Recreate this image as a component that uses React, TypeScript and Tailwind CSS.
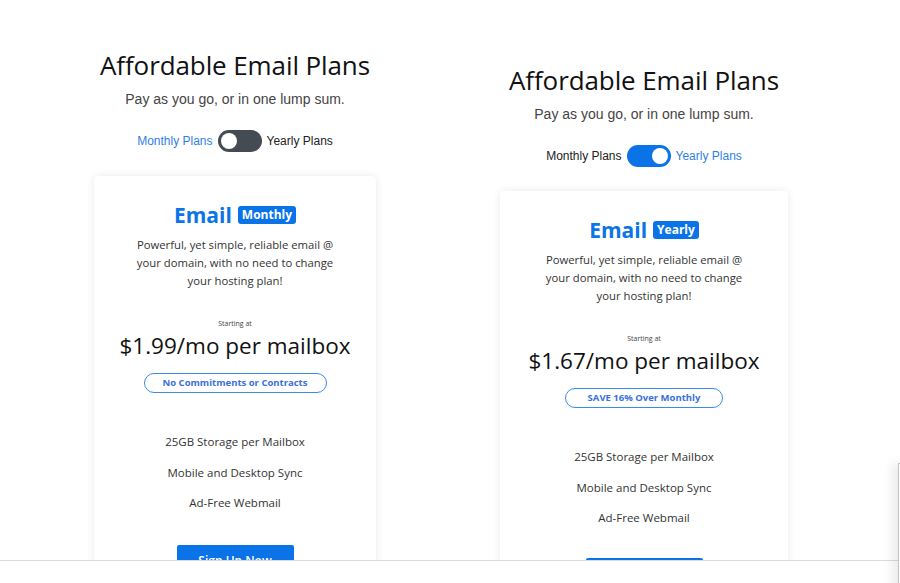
const features = ["25GB Storage per Mailbox", "Mobile and Desktop Sync", "Ad-Free Webmail"];

function Toggle({ yearly }: { yearly: boolean }) {
  return (
    <div className="flex items-center justify-center gap-[5px] font-['Liberation_Sans',Arial,sans-serif] text-[12px] leading-none">
      <span className={yearly ? "text-[#222]" : "text-[#2f7fe6]"}>Monthly Plans</span>
      <div
        className={`flex h-[22px] w-[44px] items-center rounded-full px-[3px] ${
          yearly ? "justify-end bg-[#0a73e8]" : "justify-start bg-[#444b53]"
        }`}
      >
        <div className="h-[16px] w-[16px] rounded-full bg-white" />
      </div>
      <span className={yearly ? "text-[#2f7fe6]" : "text-[#222]"}>Yearly Plans</span>
    </div>
  );
}

function PlanColumn({
  yearly,
  price,
  pill,
  width,
  pillWidth,
  btnGap,
}: {
  yearly: boolean;
  price: string;
  pill: string;
  width: string;
  pillWidth: string;
  btnGap: string;
}) {
  return (
    <div className={`flex flex-col items-center ${width}`}>
      <h1 className="text-[26px] leading-[34px] font-normal tracking-[-0.1px] text-[#111] font-['Open_Sans',sans-serif]">
        Affordable Email Plans
      </h1>
      <p className="mt-[8px] text-[14px] leading-[18px] text-[#444] font-['Liberation_Sans',Arial,sans-serif]">
        Pay as you go, or in one lump sum.
      </p>
      <div className="mt-[22px]">
        <Toggle yearly={yearly} />
      </div>

      <div className="mt-[24px] flex w-full flex-col items-center rounded-[4px] bg-white pt-[26px] pb-[40px] shadow-[0_0_8px_rgba(0,0,0,0.09)] font-['Open_Sans',sans-serif]">
        <div className="flex h-[26px] items-center gap-[6px]">
          <span className="text-[21px] font-bold leading-none text-[#0b74e6]">Email</span>
          <span className="rounded-[3px] bg-[#0a73e8] px-[4px] py-[2px] text-[12px] font-bold leading-[14px] text-white">
            {yearly ? "Yearly" : "Monthly"}
          </span>
        </div>
        <p className="mt-[8px] w-[206px] text-center text-[11.3px] leading-[18px] text-[#333]">
          Powerful, yet simple, reliable email @ your domain, with no need to change your hosting plan!
        </p>
        <span className="mt-[29px] text-[7px] leading-[10px] text-[#444]">Starting at</span>
        <span className="mt-[2px] text-[22.5px] leading-[30px] text-[#111]">{price}</span>
        <span
          className={`mt-[12px] flex h-[20px] items-center justify-center rounded-full border-[1.5px] border-[#3a8ae8] text-[9.5px] font-bold text-[#3a6fe0] ${pillWidth}`}
        >
          {pill}
        </span>
        <ul className="mt-[40px] flex flex-col items-center gap-[12.5px] text-[11.5px] leading-[18px] text-[#333]">
          {features.map((f) => (
            <li key={f}>{f}</li>
          ))}
        </ul>
        <button
          className={`h-[32px] w-[117px] rounded-[2px] bg-[#0a73e8] text-[12px] font-semibold text-white ${btnGap}`}
        >
          Sign Up Now
        </button>
      </div>
    </div>
  );
}

export default function App() {
  return (
    <div className="relative h-[583px] w-[900px] overflow-hidden bg-white">
      <div className="flex items-start pl-[94px] pt-[48px]">
        <PlanColumn
          yearly={false}
          price="$1.99/mo per mailbox"
          pill="No Commitments or Contracts"
          width="w-[282px]"
          pillWidth="w-[183px]"
          btnGap="mt-[33px]"
        />
        <div className="ml-[124px] mt-[15px]">
          <PlanColumn
            yearly={true}
            price="$1.67/mo per mailbox"
            pill="SAVE 16% Over Monthly"
            width="w-[288px]"
            pillWidth="w-[158px]"
            btnGap="mt-[31px]"
          />
        </div>
      </div>

      {/* bottom bar over the page */}
      <div className="absolute bottom-0 left-0 h-[23px] w-full border-t border-[#dcdcdc] bg-white" />
      {/* side panel peeking in from the right */}
      <div className="absolute left-[898px] top-[463px] h-[200px] w-[300px] border-l border-t border-[#c4c4c4] bg-white shadow-[-6px_0_10px_rgba(0,0,0,0.08)]" />
    </div>
  );
}
